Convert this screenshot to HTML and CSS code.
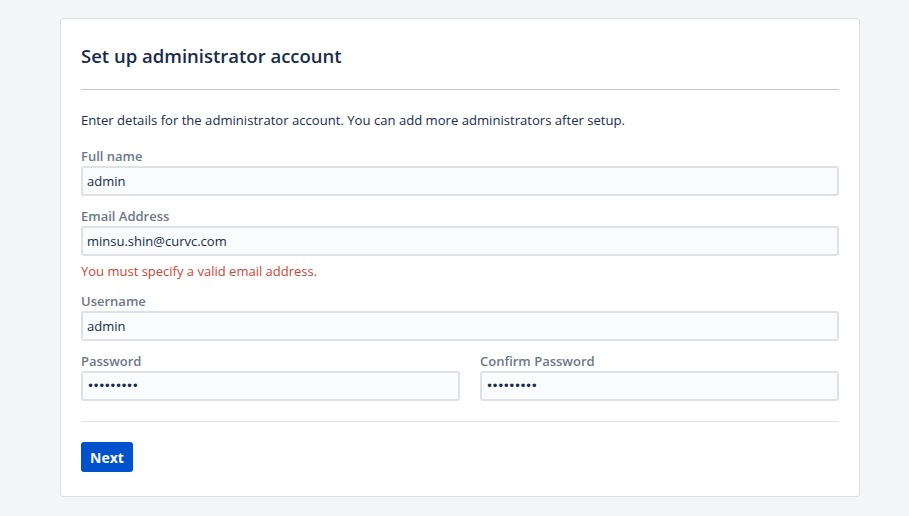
FILE: index.html
```html
<!DOCTYPE html>
<html>
<head>
<meta charset="utf-8">
<link rel="stylesheet" href="styles.css">
</head>
<body>
<div class="card">
  <h1 class="title">Set up administrator account</h1>
  <div class="intro">Enter details for the administrator account. You can add more administrators after setup.</div>
  <div class="field">
    <label class="label">Full name</label>
    <div class="input">admin</div>
  </div>
  <div class="field">
    <label class="label">Email Address</label>
    <div class="input">minsu.shin@curvc.com</div>
    <div class="error">You must specify a valid email address.</div>
  </div>
  <div class="field">
    <label class="label">Username</label>
    <div class="input">admin</div>
  </div>
  <div class="row">
    <div class="field">
      <label class="label">Password</label>
      <div class="input pw">•••••••••</div>
    </div>
    <div class="field">
      <label class="label">Confirm Password</label>
      <div class="input pw">•••••••••</div>
    </div>
  </div>
  <div class="footer">
    <button class="btn">Next</button>
  </div>
</div>
</body>
</html>
```
FILE: styles.css
```css
html, body {
  margin: 0;
  padding: 0;
  background: #f4f5f7;
  font-family: "Open Sans", "Noto Sans", "Liberation Sans", sans-serif;
  color: #172b4d;
}
body {
  padding: 18px 49px 0 60px;
}
.card {
  width: 758px;
  background: #fff;
  border: 1px solid #dfe1e6;
  border-radius: 3px;
  padding: 20px 20px 24px 20px;
}
.title {
  margin: 0;
  font-size: 18.5px;
  font-weight: 600;
  line-height: 32px;
  padding: 1px 0 17px;
  border-bottom: 1px solid #c1c7d0;
  color: #172b4d;
}
.intro {
  font-size: 13.1px;
  line-height: 20px;
  margin-top: 20px;
  padding-bottom: 6px;
}
.field {
  display: flex;
  flex-direction: column;
  margin-top: 10px;
}
.label {
  font-size: 13px;
  font-weight: 600;
  color: #6b778c;
  line-height: 20px;
}
.input {
  box-sizing: border-box;
  height: 30px;
  border: 2px solid #dfe1e6;
  border-radius: 3px;
  background: #fafbfc;
  padding: 0 4px;
  font-size: 13px;
  line-height: 26px;
  color: #172b4d;
}
.pw {
  letter-spacing: -1.5px;
  font-size: 12px;
  font-family: "DejaVu Sans", sans-serif;
}
.error {
  color: #d04437;
  font-size: 13px;
  line-height: 20px;
  margin-top: 5px;
}
.row {
  display: grid;
  grid-template-columns: 379px 359px;
  column-gap: 20px;
}
.footer {
  margin-top: 20px;
  border-top: 1px solid #dfe1e6;
  padding-top: 20px;
}
.btn {
  display: block;
  background: #0052cc;
  color: #fff;
  border: none;
  border-radius: 3px;
  height: 30px;
  padding: 0 9px;
  font-family: inherit;
  font-size: 14px;
  font-weight: 700;
}
```
